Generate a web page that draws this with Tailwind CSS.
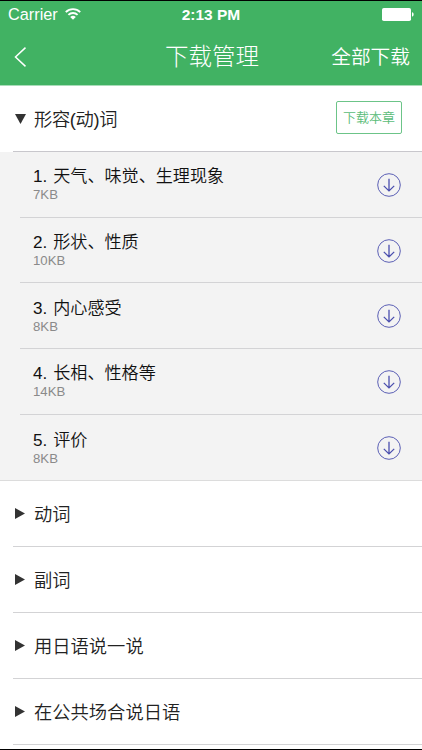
<!DOCTYPE html>
<html lang="zh-CN">
<head>
    <meta charset="UTF-8">
    <meta name="viewport" content="width=device-width, initial-scale=1.0">
    <title>下载管理</title>
    <script src="https://cdn.jsdelivr.net/npm/@tailwindcss/browser@4"></script>
</head>
<body class="w-[422px] h-[750px] overflow-hidden bg-white text-[#222] font-['Liberation_Sans','Noto_Sans_CJK_SC',sans-serif] font-[350]">
<div class="h-[750px] flex flex-col border-y border-black">
    <header class="h-[85px] shrink-0 bg-[#41b263] border-b border-[#a9dcb9] bg-clip-padding text-white">
        <!-- status bar -->
        <div class="h-[27px] pl-2 pr-2 grid grid-cols-3 items-center text-base leading-none">
            <div class="flex items-center gap-[7px]">
                <span class="text-[16.3px]">Carrier</span>
                <svg class="w-4 h-3" viewBox="0 0 16 12" fill="none" stroke="white" stroke-width="1.9">
                    <path d="M0.8 4.1a10.2 10.2 0 0 1 14.4 0"/>
                    <path d="M3.4 6.9a6.5 6.5 0 0 1 9.2 0"/>
                    <path d="M8 11.8L5.2 9a4 4 0 0 1 5.6 0z" fill="white" stroke="none"/>
                </svg>
            </div>
            <span class="text-center text-[15.5px] font-bold">2:13 PM</span>
            <svg class="justify-self-end w-8 h-[13px]" viewBox="0 0 32 13" fill="white">
                <rect x="0" y="0" width="29" height="13" rx="1.8"/>
                <path d="M30 4.3c2.2 .6 2.2 3.8 0 4.4z"/>
            </svg>
        </div>
        <!-- nav bar -->
        <div class="h-[57px] pl-[14px] pr-3 grid grid-cols-[1fr_auto_1fr] items-center">
            <svg class="w-3 h-5" viewBox="0 0 12 20" fill="none" stroke="white" stroke-width="1.5">
                <path d="M11.5 0.6L1.5 10l10 9.4"/>
            </svg>
            <h1 class="pt-0.5 text-[23.5px] leading-none font-light">下载管理</h1>
            <button class="justify-self-end pt-0.5 text-[19.7px] leading-none">全部下载</button>
        </div>
    </header>

    <main class="flex-1 overflow-hidden">
        <section>
            <div class="h-[66px] ml-[13px] pl-[2px] pr-5 flex items-center border-b border-[#c8c7cc]">
                <svg class="w-[11px] h-[10px]" viewBox="0 0 11 10" fill="#333"><path d="M0 0h11L5.5 10z"/></svg>
                <h2 class="ml-2 pt-[3px] text-[18.3px] leading-none tracking-[-0.35px]">形容(动)词</h2>
                <button class="ml-auto mb-0.5 w-[66px] h-[33px] border border-[#6cc488] rounded-xs text-[#5abc78] text-[13px] leading-none">下载本章</button>
            </div>
            <ul id="lessonList" class="bg-[#f3f3f3] border-b border-[#dcdcdc]"></ul>
        </section>
        <div id="chapterList"></div>
    </main>
</div>

<script>
    const lessons = [
        { name: "1. 天气、味觉、生理现象", size: "7KB" },
        { name: "2. 形状、性质", size: "10KB" },
        { name: "3. 内心感受", size: "8KB" },
        { name: "4. 长相、性格等", size: "14KB" },
        { name: "5. 评价", size: "8KB" },
    ];
    const chapters = ["动词", "副词", "用日语说一说", "在公共场合说日语"];

    document.getElementById("lessonList").innerHTML = lessons.map(lesson => `
        <li class="h-[65.7px] ml-5 pt-px pl-[13px] pr-[21px] flex items-center justify-between border-b border-[#d3d3d5] last:border-b-0">
            <div class="pt-px">
                <p class="text-[17.1px] leading-[20px] [word-spacing:1.2px] text-[#111]">${lesson.name}</p>
                <p class="text-[13.2px] leading-[16px] text-[#8a8a8a]">${lesson.size}</p>
            </div>
            <svg class="w-6 h-6" viewBox="0 0 24 24" fill="none" stroke="#4b4fae">
                <circle cx="12" cy="12" r="11.3" stroke-width="0.9"/>
                <path d="M12 5.7v12.2M6.8 12.9l5.2 5 5.2-5" stroke-width="1.3"/>
            </svg>
        </li>
    `).join("");

    document.getElementById("chapterList").innerHTML = chapters.map(name => `
        <section class="h-[66px] ml-[13px] pl-[2px] flex items-center border-b border-[#d3d3d5]">
            <svg class="w-[10px] h-[11px]" viewBox="0 0 10 11" fill="#333"><path d="M0 0v11l10-5.5z"/></svg>
            <h2 class="ml-[9px] pt-[3px] text-[18.3px] leading-none">${name}</h2>
        </section>
    `).join("");
</script>
</body>
</html>
